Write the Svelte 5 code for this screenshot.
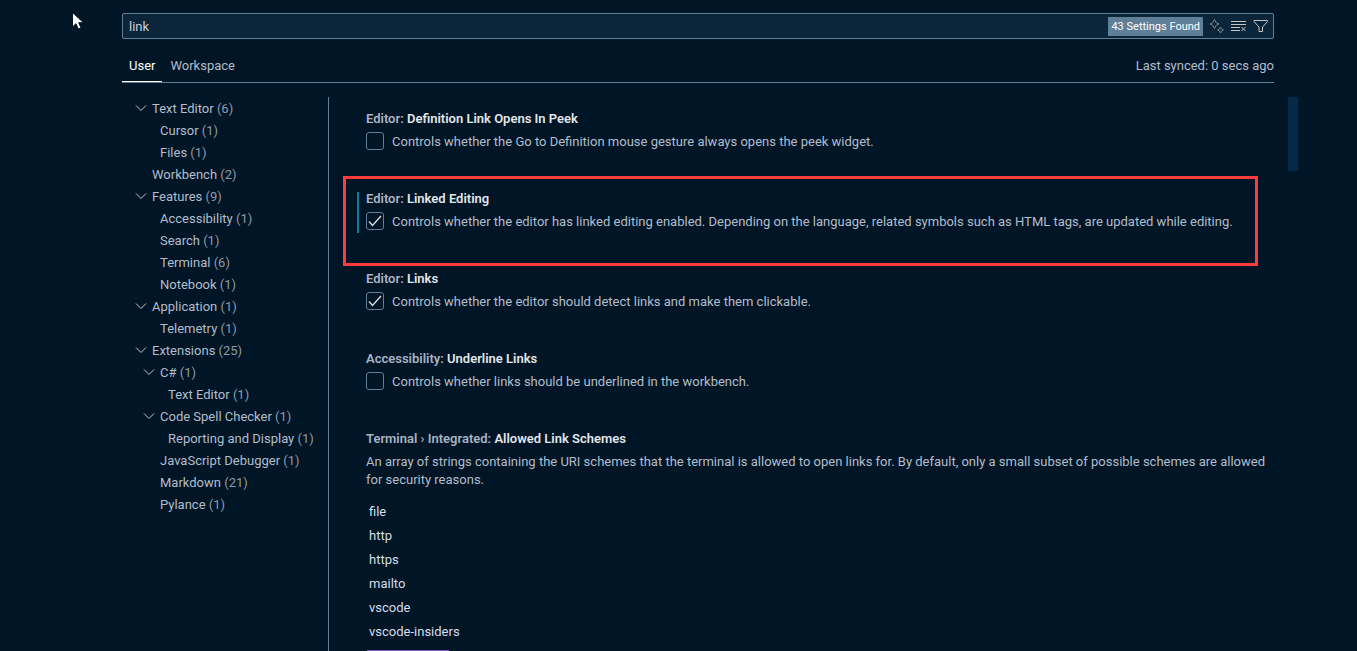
<script lang="ts">
  type TocRow = { label: string; count: number; level: number; open?: boolean };
  type Setting = { id: string; category: string; name: string; text: string; checked: boolean; modified?: boolean };

  let query = $state('link');
  let activeTab = $state('User');

  const tabs = ['User', 'Workspace'];

  const toc: TocRow[] = [
    { label: 'Text Editor', count: 6, level: 0, open: true },
    { label: 'Cursor', count: 1, level: 1 },
    { label: 'Files', count: 1, level: 1 },
    { label: 'Workbench', count: 2, level: 0 },
    { label: 'Features', count: 9, level: 0, open: true },
    { label: 'Accessibility', count: 1, level: 1 },
    { label: 'Search', count: 1, level: 1 },
    { label: 'Terminal', count: 6, level: 1 },
    { label: 'Notebook', count: 1, level: 1 },
    { label: 'Application', count: 1, level: 0, open: true },
    { label: 'Telemetry', count: 1, level: 1 },
    { label: 'Extensions', count: 25, level: 0, open: true },
    { label: 'C#', count: 1, level: 1, open: true },
    { label: 'Text Editor', count: 1, level: 2 },
    { label: 'Code Spell Checker', count: 1, level: 1, open: true },
    { label: 'Reporting and Display', count: 1, level: 2 },
    { label: 'JavaScript Debugger', count: 1, level: 1 },
    { label: 'Markdown', count: 21, level: 1 },
    { label: 'Pylance', count: 1, level: 1 }
  ];

  let settings: Setting[] = $state([
    { id: 'peek', category: 'Editor:', name: 'Definition Link Opens In Peek', text: 'Controls whether the Go to Definition mouse gesture always opens the peek widget.', checked: false },
    { id: 'linked', category: 'Editor:', name: 'Linked Editing', text: 'Controls whether the editor has linked editing enabled. Depending on the language, related symbols such as HTML tags, are updated while editing.', checked: true, modified: true },
    { id: 'links', category: 'Editor:', name: 'Links', text: 'Controls whether the editor should detect links and make them clickable.', checked: true },
    { id: 'underline', category: 'Accessibility:', name: 'Underline Links', text: 'Controls whether links should be underlined in the workbench.', checked: false }
  ]);

  const schemes = ['file', 'http', 'https', 'mailto', 'vscode', 'vscode-insiders'];
</script>

<div class="editor">
  <header>
    <div class="search">
      <input class="query" type="text" aria-label="Search settings" bind:value={query} />
      <span class="badge">43 Settings Found</span>
      <button class="icon dim" aria-label="AI search">
        <svg viewBox="0 0 16 16"><path d="M5.500 1.500L7 4.500L10 6L7 7.500L5.500 10.500L4 7.500L1 6L4 4.500ZM11.500 9L12.500 11L14.500 12L12.500 13L11.500 15L10.500 13L8.500 12L10.500 11Z" /></svg>
      </button>
      <button class="icon" aria-label="Clear search">
        <svg viewBox="0 0 16 16"><path d="M0 3.500H15M0 6.500H15M0 9.500H9M0 12.500H9M10.500 9L14.500 13M14.500 9L10.500 13" /></svg>
      </button>
      <button class="icon" aria-label="Filter settings">
        <svg viewBox="0 0 16 16"><path d="M1 2.500H14.500V3.500L9.500 9V13.500H6V9L1 3.500Z" /></svg>
      </button>
    </div>
    <nav class="tabs">
      {#each tabs as tab}
        <button class="tab" class:active={tab === activeTab} onclick={() => (activeTab = tab)}>{tab}</button>
      {/each}
      <span class="sync">Last synced: 0 secs ago</span>
    </nav>
  </header>

  <div class="body">
    <aside>
      {#each toc as row}
        <a class="row" href="#settings" style="--level: {row.level}">
          <span class="twisty">
            {#if row.open}
              <svg viewBox="0 0 12 12"><path d="M1 3.500L6 8.500L11 3.500" /></svg>
            {/if}
          </span>
          <span>{row.label} <span class="count">({row.count})</span></span>
        </a>
      {/each}
    </aside>

    <main id="settings">
      {#each settings as s (s.id)}
        <section class="setting" class:modified={s.modified}>
          <h2><span>{s.category}</span> {s.name}</h2>
          <label class="option">
            <span class="box">
              <input type="checkbox" bind:checked={s.checked} />
              {#if s.checked}
                <svg viewBox="0 0 18 18"><path d="M3 9.500L6.500 13.500L15 4" /></svg>
              {/if}
            </span>
            <span class="description">{s.text}</span>
          </label>
          {#if s.modified}<div class="highlight"></div>{/if}
        </section>
      {/each}
      <section class="setting">
        <h2><span>Terminal › Integrated:</span> Allowed Link Schemes</h2>
        <p class="description">An array of strings containing the URI schemes that the terminal is allowed to open links for. By default, only a small subset of possible schemes are allowed for security reasons.</p>
        <ul>
          {#each schemes as scheme}
            <li>{scheme}</li>
          {/each}
        </ul>
        <button class="add" aria-label="Add item"></button>
      </section>
    </main>
    <div class="scrollbar"></div>
  </div>

  <svg class="pointer" viewBox="0 0 12 18"><path d="M0.500 0.500V15L4 11.700L6.300 17L9 15.800L6.700 10.700H11.500Z" /></svg>
</div>

<style>
  :global(body) {
    margin: 0;
    background: #001526;
  }

  .editor {
    box-sizing: border-box;
    position: relative;
    display: flex;
    flex-direction: column;
    height: 100vh;
    overflow: hidden;
    padding: 13px 83px 0 122px;
    background: #001526;
    color: #b3bdcb;
    font: 13px/18px Roboto, "Noto Sans", sans-serif;
  }

  button {
    padding: 0;
    border: 0;
    background: none;
    color: inherit;
    font: inherit;
  }

  .search {
    display: flex;
    align-items: center;
    gap: 6px;
    box-sizing: border-box;
    height: 26px;
    padding: 0 4px 0 6px;
    border: 1px solid #5f7e97;
    border-radius: 2px;
    background: #0b253a;
  }

  .query {
    flex: 1;
    min-width: 0;
    padding: 2px 0 0;
    border: 0;
    outline: 0;
    background: none;
    color: #c9d0dc;
    font: inherit;
  }

  .badge {
    padding: 1px 3px 0;
    background: #5f7e97;
    color: #fff;
    font-size: 11px;
    line-height: 18px;
  }

  .icon {
    display: flex;
  }

  svg {
    fill: none;
    stroke: #c5c5c5;
  }

  .icon svg {
    width: 16px;
    height: 16px;
  }

  .dim {
    opacity: 0.6;
  }

  .tabs {
    display: flex;
    align-items: stretch;
    height: 31px;
    margin-top: 12px;
    border-bottom: 1px solid #5f7e97;
  }

  .tab {
    box-sizing: border-box;
    margin-right: 1px;
    padding: 0 7px 1px;
    border-bottom: 1px solid transparent;
    line-height: 28px;
  }

  .tab.active {
    border-bottom-color: #fff;
    color: #fff;
  }

  .sync {
    margin-left: auto;
    line-height: 30px;
  }

  .body {
    display: flex;
    flex: 1;
    min-height: 0;
    margin: 14px -24px 0 0;
  }

  aside {
    flex: none;
    box-sizing: border-box;
    width: 207px;
    padding-top: 1px;
    border-right: 1px solid #5f7e97;
  }

  .row {
    display: flex;
    gap: 5px;
    padding-left: calc(13px + var(--level) * 8px);
    color: inherit;
    line-height: 22px;
    text-decoration: none;
    white-space: nowrap;
  }

  .twisty {
    display: flex;
    align-items: center;
    width: 12px;
    padding-bottom: 2px;
  }

  .twisty svg {
    width: 12px;
    height: 12px;
  }

  .count {
    color: #8e9aa9;
  }

  main {
    flex: 1;
    min-width: 0;
    padding: 0 14px 0 23px;
  }

  .setting {
    position: relative;
    box-sizing: border-box;
    min-height: 80px;
    padding: 12px 4px 0 14px;
  }

  .setting.modified::before {
    content: "";
    position: absolute;
    top: 15px;
    left: 5px;
    width: 2px;
    height: 41px;
    background: #0c7d9d;
  }

  .highlight {
    position: absolute;
    inset: -1px 16px -9px -9px;
    border: 3px solid #ff3b3b;
    pointer-events: none;
  }

  h2 {
    margin: 0 0 3px;
    color: #e3e5e8;
    font-size: 13px;
    font-weight: 600;
    line-height: 20px;
  }

  h2 span {
    color: #a9b3c1;
  }

  .option {
    display: flex;
    gap: 8px;
  }

  .box {
    display: grid;
    flex: none;
    width: 18px;
    height: 18px;
  }

  .box input {
    grid-area: 1 / 1;
    appearance: none;
    box-sizing: border-box;
    width: 18px;
    height: 18px;
    margin: 0;
    border: 1px solid #5f7e97;
    border-radius: 3px;
  }

  .box svg {
    grid-area: 1 / 1;
    pointer-events: none;
    stroke: #e0e0e0;
    stroke-width: 1.3;
  }

  .description {
    margin: 0;
    padding-top: 1px;
  }

  ul {
    margin: 11px 0 0;
    padding: 0 3px;
    color: #d6deeb;
    line-height: 24px;
    list-style: none;
  }

  .add {
    width: 82px;
    height: 26px;
    margin: 6px 1px 0;
    background: #7e57c2;
  }

  .scrollbar {
    width: 10px;
    height: 74px;
    background: #042a4a;
  }

  .pointer {
    position: absolute;
    top: 12px;
    left: 72px;
    width: 12px;
    height: 18px;
    fill: #fff;
    stroke: #001526;
  }
</style>
